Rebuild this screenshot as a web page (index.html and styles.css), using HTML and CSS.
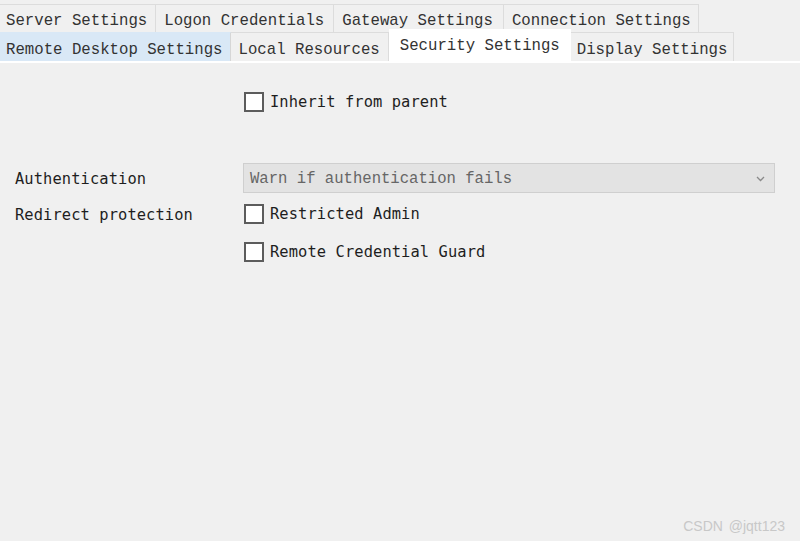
FILE: index.html
```html
<!DOCTYPE html>
<html>
<head>
<meta charset="utf-8">
<link rel="stylesheet" href="styles.css">
</head>
<body>
<div class="tabs">
  <div class="row row1">
    <div class="tab first">Server Settings</div>
    <div class="tab">Logon Credentials</div>
    <div class="tab">Gateway Settings</div>
    <div class="tab">Connection Settings</div>
  </div>
  <div class="row row2">
    <div class="tab first hover">Remote Desktop Settings</div>
    <div class="tab">Local Resources</div>
    <div class="tab selected">Security Settings</div>
    <div class="tab">Display Settings</div>
  </div>
</div>
<div class="content">
  <div class="line inherit">
    <span class="label"></span>
    <label class="check"><span class="box"></span><span class="ctext">Inherit from parent</span></label>
  </div>
  <div class="line auth">
    <span class="label">Authentication</span>
    <div class="select">
      <span class="stext">Warn if authentication fails</span>
      <svg class="chev" width="9" height="6" viewBox="0 0 9 6"><polyline points="1,1 4.5,4.5 8,1" fill="none" stroke="#8a8a8a" stroke-width="1.3"/></svg>
    </div>
  </div>
  <div class="line redirect">
    <span class="label">Redirect protection</span>
    <label class="check"><span class="box"></span><span class="ctext">Restricted Admin</span></label>
  </div>
  <div class="line guard">
    <span class="label"></span>
    <label class="check"><span class="box"></span><span class="ctext">Remote Credential Guard</span></label>
  </div>
</div>
<div class="watermark">CSDN @jqtt123</div>
</body>
</html>
```
FILE: styles.css
```css
html, body {
  margin: 0;
  padding: 0;
}
body {
  background: #f0f0f0;
  width: 800px;
  height: 541px;
  overflow: hidden;
  position: relative;
  font-family: "Liberation Mono", "DejaVu Sans Mono", monospace;
  font-size: 15.7px;
  color: #333;
}
.tabs {
  padding-top: 4px;
  border-bottom: 2px solid #ffffff;
}
.row {
  display: flex;
  height: 28px;
}
.row2 {
  height: 29px;
}
.tab {
  box-sizing: border-box;
  border-top: 1px solid #dcdcdc;
  border-right: 1px solid #dcdcdc;
  padding: 4px 8px 0 8px;
  line-height: 24px;
  white-space: nowrap;
  background: #f0f0f0;
}
.row2 .tab {
  padding-top: 5px;
}
.tab.first {
  padding-left: 6px;
}
.row1 .tab:nth-child(2) {
  padding-right: 9px;
}
.row1 .tab:nth-child(3) {
  padding-right: 10px;
}
.row1 .tab:nth-child(4) {
  padding-right: 7px;
}
.row2 .tab.first {
  padding-right: 7px;
}
.row2 .tab:nth-child(4) {
  padding: 5px 6px 0 6px;
}
.hover {
  background: #d9e8f6;
  border-top-color: #d9e8f6;
  border-right-color: #d6d6d6;
}
.row2 .selected {
  background: #ffffff;
  border: none;
  margin-top: -3px;
  height: 32px;
  line-height: 24px;
  padding: 5px 11px 0 11px;
  position: relative;
}
.content {
  padding: 29px 25px 0 15px;
}
.line {
  display: grid;
  grid-template-columns: 228px 1fr;
  align-items: center;
}
.label {
  font-family: "DejaVu Sans Mono", monospace;
  font-size: 15.4px;
  color: #1e1e1e;
  letter-spacing: 0.1px;
  padding-top: 2px;
}
.check {
  display: flex;
  align-items: center;
  gap: 6px;
}
.box {
  box-sizing: border-box;
  width: 20px;
  height: 20px;
  background: #ffffff;
  border: 2px solid #5c5c5c;
  margin-left: 1px;
}
.ctext {
  font-family: "DejaVu Sans Mono", monospace;
  font-size: 15.4px;
  color: #1e1e1e;
  letter-spacing: 0.1px;
}
.inherit {
  height: 20px;
}
.auth {
  margin-top: 51px;
  height: 30px;
}
.select {
  box-sizing: border-box;
  height: 30px;
  background: #e3e3e3;
  border: 1px solid #cfcfcf;
  display: flex;
  align-items: center;
  justify-content: space-between;
  padding: 2px 9px 0 6px;
}
.stext {
  color: #666;
  font-size: 15.6px;
}
.chev {
  display: block;
}
.redirect {
  margin-top: 11px;
  height: 20px;
}
.guard {
  margin-top: 18px;
  height: 20px;
}
.watermark {
  position: absolute;
  right: 15px;
  bottom: 7px;
  font-family: "Liberation Sans", Arial, sans-serif;
  font-size: 14px;
  color: #c8c8c8;
  word-spacing: 2px;
}
```
